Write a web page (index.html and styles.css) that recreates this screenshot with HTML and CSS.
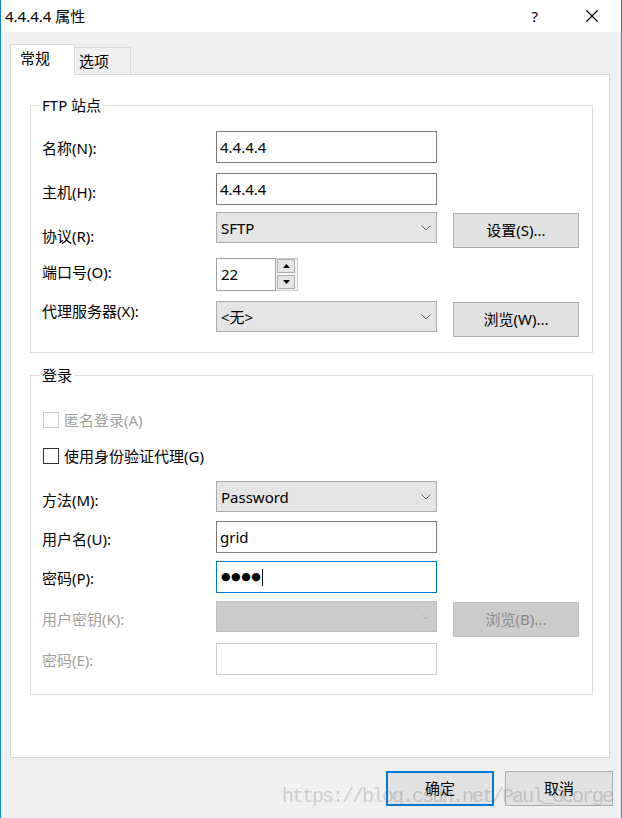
FILE: index.html
```html
<!DOCTYPE html>
<html lang="zh-CN">
<head>
<meta charset="utf-8">
<title>4.4.4.4 属性</title>
<link rel="stylesheet" href="styles.css">
</head>
<body>
<div class="window">
  <div class="titlebar">
    <span class="title">4.4.4.4 属性</span>
    <span class="help">?</span>
    <span class="close"><svg width="12" height="12" viewBox="0 0 12 12"><path d="M0.5 0.5 L11.5 11.5 M11.5 0.5 L0.5 11.5" stroke="#000" stroke-width="1.1" fill="none"/></svg></span>
  </div>
  <div class="content">
    <div class="tabs">
      <div class="tab active">常规</div>
      <div class="tab">选项</div>
    </div>
    <div class="panel">
      <div class="group g1">
        <div class="legend">FTP 站点</div>
        <div class="row r1"><span class="lab">名称(N):</span><div class="input">4.4.4.4</div></div>
        <div class="row r2"><span class="lab">主机(H):</span><div class="input">4.4.4.4</div></div>
        <div class="row r3"><span class="lab">协议(R):</span><div class="combo"><span>SFTP</span><svg class="chev" width="10" height="6" viewBox="0 0 10 6"><path d="M0.5 0.5 5 5 9.5 0.5" fill="none" stroke="#606060"/></svg></div><div class="btn">设置(S)...</div></div>
        <div class="row r4"><span class="lab">端口号(O):</span>
          <div class="spin">
            <div class="spin-val">22</div>
            <div class="spin-btns">
              <div class="spin-btn"><svg width="7" height="4" viewBox="0 0 7 4"><path d="M3.5 0 7 4 0 4Z" fill="#000"/></svg></div>
              <div class="spin-btn"><svg width="7" height="4" viewBox="0 0 7 4"><path d="M0 0 7 0 3.5 4Z" fill="#000"/></svg></div>
            </div>
          </div>
        </div>
        <div class="row r5"><span class="lab">代理服务器(X):</span><div class="combo"><span>&lt;无&gt;</span><svg class="chev" width="10" height="6" viewBox="0 0 10 6"><path d="M0.5 0.5 5 5 9.5 0.5" fill="none" stroke="#606060"/></svg></div><div class="btn">浏览(W)...</div></div>
      </div>

      <div class="group g2">
        <div class="legend">登录</div>
        <label class="check c1 disabled"><span class="box"></span><span>匿名登录(A)</span></label>
        <label class="check c2"><span class="box"></span><span>使用身份验证代理(G)</span></label>
        <div class="row rm"><span class="lab">方法(M):</span><div class="combo"><span>Password</span><svg class="chev" width="10" height="6" viewBox="0 0 10 6"><path d="M0.5 0.5 5 5 9.5 0.5" fill="none" stroke="#606060"/></svg></div></div>
        <div class="row ru"><span class="lab">用户名(U):</span><div class="input">grid</div></div>
        <div class="row rp"><span class="lab">密码(P):</span><div class="input focused"><span class="dots">●●●●</span><span class="caret"></span></div></div>
        <div class="row rk disabled"><span class="lab">用户密钥(K):</span><div class="combo"><span></span><svg class="chev" width="10" height="6" viewBox="0 0 10 6"><path d="M0.5 0.5 5 5 9.5 0.5" fill="none" stroke="#b4b4b4"/></svg></div><div class="btn">浏览(B)...</div></div>
        <div class="row re disabled"><span class="lab">密码(E):</span><div class="input"></div></div>
      </div>
    </div>
  </div>
  <div class="actions">
    <div class="dbtn default">确定</div>
    <div class="dbtn">取消</div>
  </div>
  <div class="watermark">https://blog.csdn.net/Paul_George</div>
</div>
</body>
</html>
```

FILE: styles.css
```css
html, body {
  margin: 0;
  padding: 0;
}
body {
  font-family: "Noto Sans", "Noto Sans CJK SC", sans-serif;
  font-size: 15px;
  line-height: 20px;
  color: #000;
  background: #fff;
}
.window {
  position: relative;
  width: 622px;
  height: 818px;
  box-sizing: border-box;
  border-left: 1px solid #1883d7;
  border-right: 1px solid #1883d7;
  background: #f0f0f0;
  overflow: hidden;
}
.titlebar {
  height: 32px;
  background: #fff;
  display: flex;
  align-items: center;
  padding-left: 4px;
}
.title {
  flex: 1;
}
.help {
  margin-right: 48px;
}
.close {
  display: flex;
  margin-right: 23px;
}
.content {
  padding: 12px 11px 0 9px;
}
.tabs {
  display: flex;
  align-items: flex-end;
  height: 30px;
}
.tab {
  box-sizing: border-box;
  height: 27px;
  width: 56px;
  padding: 3px 0 0 4px;
  border: 1px solid #d9d9d9;
  border-left: none;
  border-bottom: none;
  background: #f0f0f0;
}
.tab.active {
  position: relative;
  z-index: 1;
  width: 65px;
  height: 31px;
  margin-bottom: -1px;
  padding-left: 9px;
  border-left: 1px solid #d9d9d9;
  background: #fff;
}
.panel {
  box-sizing: border-box;
  height: 684px;
  border: 1px solid #d9d9d9;
  background: #fff;
  padding: 0 16px 0 19px;
}
.group {
  border: 1px solid #dcdcdc;
  padding: 0 0 0 11px;
}
.g1 {
  margin-top: 30px;
  padding-bottom: 15px;
}
.g2 {
  margin-top: 22px;
  padding-bottom: 19px;
}
.legend {
  width: max-content;
  margin: -11px 0 0 -2px;
  padding: 0 2px;
  background: #fff;
}
.row {
  display: grid;
  grid-template-columns: 158px 221px 126px;
  column-gap: 16px;
  align-items: start;
}
.input {
  box-sizing: border-box;
  height: 32px;
  border: 1px solid #7a7a7a;
  background: #fff;
  padding: 0 3px;
  line-height: 30px;
  display: flex;
  align-items: center;
}
.input.focused {
  border-color: #0078d7;
}
.combo {
  box-sizing: border-box;
  height: 31px;
  border: 1px solid #acacac;
  background: #e5e5e5;
  padding: 0 5px 0 4px;
  display: flex;
  align-items: center;
  justify-content: space-between;
}
.btn {
  box-sizing: border-box;
  height: 35px;
  margin-top: 1px;
  border: 1px solid #adadad;
  background: #e1e1e1;
  text-align: center;
  line-height: 33px;
}
.r1 { margin-top: 16px; }
.r1 .lab { padding-top: 7px; }
.r2 { margin-top: 10px; }
.r2 .lab { padding-top: 9px; }
.r3 { margin-top: 7px; }
.r3 .lab { padding-top: 14px; }
.r4 { margin-top: 10px; }
.r4 .lab { padding-top: 4px; }
.r5 { margin-top: 10px; }
.r5 .lab { padding-top: 0; }

.spin {
  box-sizing: border-box;
  width: 82px;
  height: 33px;
  display: flex;
  border: 1px solid #cccccc;
  background: #f7f7f7;
}
.spin-val {
  box-sizing: border-box;
  width: 60px;
  height: 33px;
  margin: -1px 0 -1px -1px;
  border: 1px solid #a0a0a0;
  background: #fff;
  padding-left: 4px;
  line-height: 31px;
}
.spin-btns {
  display: flex;
  flex-direction: column;
  gap: 2px;
  padding: 0 1px 0 1px;
}
.spin-btn {
  box-sizing: border-box;
  width: 18px;
  height: 14px;
  border: 1px solid #adadad;
  background: #e5e5e5;
  display: flex;
  align-items: center;
  justify-content: center;
}

.check {
  display: flex;
  align-items: center;
  gap: 5px;
  height: 20px;
  margin-left: 1px;
}
.box {
  box-sizing: border-box;
  width: 16px;
  height: 16px;
  border: 1px solid #333;
  background: #fff;
}
.c1 { margin-top: 25px; }
.c2 { margin-top: 16px; }
.check.disabled { color: #a0a0a0; }
.check.disabled .box { border-color: #cccccc; }

.rm { margin-top: 15px; }
.rm .lab { padding-top: 9px; }
.ru { margin-top: 9px; }
.ru .lab { padding-top: 8px; }
.rp { margin-top: 8px; }
.rp .lab { padding-top: 7px; }
.rk { margin-top: 8px; }
.rk .lab { padding-top: 8px; }
.re { margin-top: 6px; }
.re .lab { padding-top: 7px; }

.row.disabled .lab { color: #a0a0a0; }
.row.disabled .combo {
  background: #cccccc;
  border-color: #bfbfbf;
}
.row.disabled .btn {
  background: #cccccc;
  border-color: #bfbfbf;
  color: #8a8a8a;
}
.row.disabled .input {
  border-color: #cccccc;
}

.dots {
  font-family: "DejaVu Sans", sans-serif;
  font-size: 11px;
  letter-spacing: 0.5px;
  line-height: 30px;
  margin-left: 1px;
}
.caret {
  display: inline-block;
  width: 0;
  height: 17px;
  border-left: 1px solid #000;
  margin-left: 1px;
}

.actions {
  display: flex;
  justify-content: flex-end;
  gap: 11px;
  padding: 13px 8px 0 0;
}
.dbtn {
  box-sizing: border-box;
  width: 108px;
  height: 35px;
  border: 1px solid #adadad;
  background: #e1e1e1;
  text-align: center;
  line-height: 33px;
}
.dbtn.default {
  border: 2px solid #0078d7;
  line-height: 31px;
}
.watermark {
  position: absolute;
  left: 281px;
  top: 785px;
  font-family: "Liberation Mono", monospace;
  font-size: 20px;
  letter-spacing: -2px;
  line-height: 24px;
  color: rgba(100, 100, 100, 0.26);
  white-space: nowrap;
}
```
